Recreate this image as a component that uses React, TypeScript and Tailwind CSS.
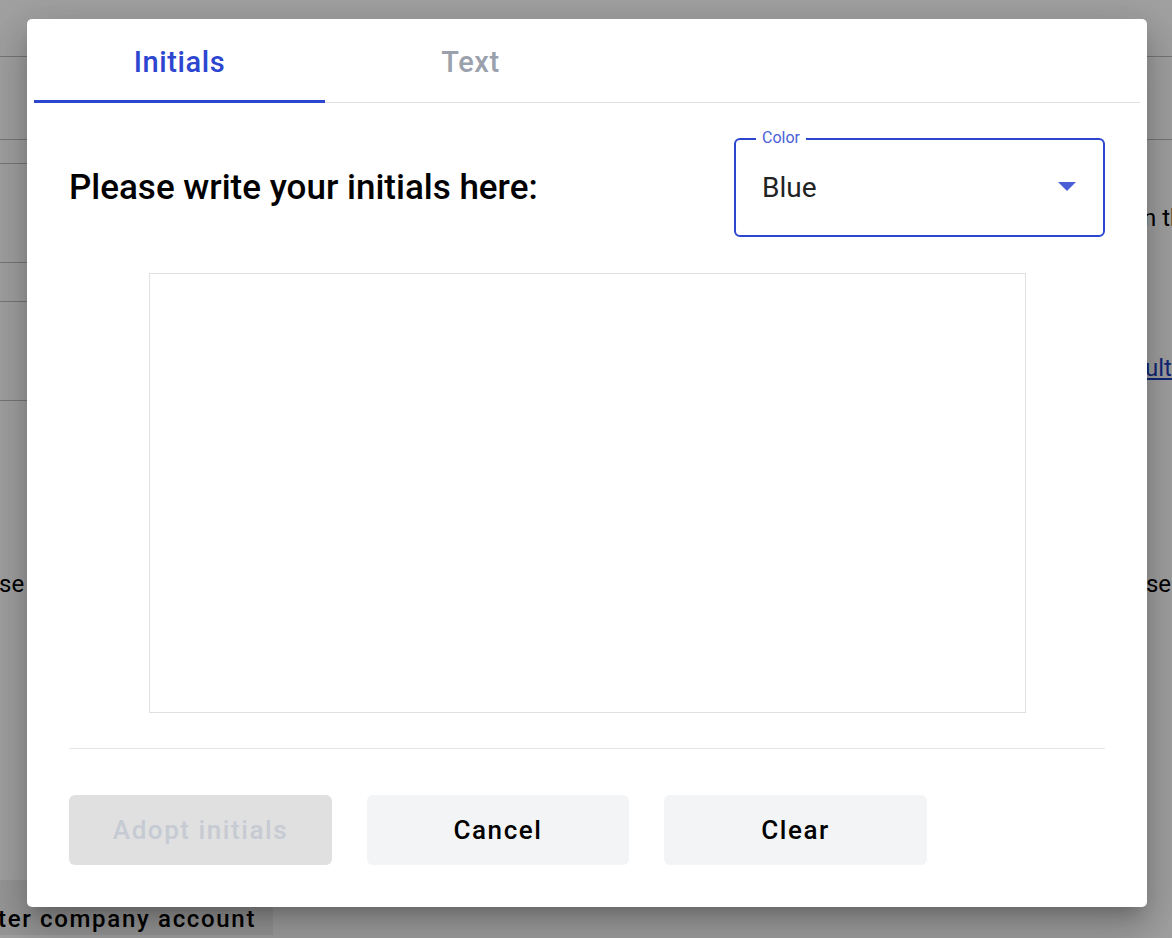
export default function App() {
  return (
    <div className="relative h-[938px] w-[1172px] overflow-hidden bg-white font-['Roboto',sans-serif] text-black">
      {/* page behind the dialog */}
      <div className="flex flex-col">
        <div className="h-[57px] border-b border-[#bdbdbd]" />
        <div className="h-[83px] border-b border-[#bdbdbd]" />
        <div className="flex">
          <div className="flex w-[400px] shrink-0 flex-col">
            <div className="h-[24px] border-b border-[#bdbdbd]" />
            <div className="h-[99px] border-b border-[#bdbdbd]" />
            <div className="h-[39px] border-b border-[#bdbdbd]" />
            <div className="h-[99px] border-b border-[#bdbdbd]" />
          </div>
          <div className="flex flex-col text-[24px] leading-[28px] whitespace-nowrap">
            <div className="mt-[64px] pl-[743px]">n the</div>
            <div className="mt-[122px] pl-[745px] text-[#1f3fbf] underline">ult</div>
          </div>
        </div>
        <div className="mt-[169px] flex justify-between text-[24px] leading-[28px] whitespace-nowrap">
          <span className="-ml-[1px]">se</span>
          <span className="pr-[1px]">se</span>
        </div>
        <div className="mt-[282px] flex h-[55px] w-[273px] items-center bg-[#f0f0f0] text-[24px] font-medium tracking-[0.07em] whitespace-nowrap">
          <span className="-ml-[2px] pt-[22px]">ter company account</span>
        </div>
      </div>

      {/* modal overlay */}
      <div className="absolute inset-0 flex items-start bg-black/[0.37] pl-[27px] pt-[19px]">
        <div className="flex w-[1120px] flex-col rounded-[5px] bg-white px-[42px] pb-[42px] shadow-[0px_11px_15px_-7px_rgba(0,0,0,0.2),0px_24px_38px_3px_rgba(0,0,0,0.14),0px_9px_46px_8px_rgba(0,0,0,0.12)]">
          <div className="-mx-[35px] flex h-[84px] border-b border-[#e0e0e0]">
            <button className="-mb-px flex h-[84px] w-[291px] items-center justify-center border-b-[3px] border-[#2c46d0] pt-[6px] text-[29px] font-medium tracking-[0.02em] text-[#2c46d0]">
              Initials
            </button>
            <button className="-mb-px flex h-[84px] w-[291px] items-center justify-center border-b-[3px] border-transparent pt-[6px] text-[29px] font-medium tracking-[0.02em] text-[#9aa1ac]">
              Text
            </button>
          </div>

          <div className="mt-[35px] flex items-center justify-between">
            <h2 className="text-[35px] font-medium leading-none">Please write your initials here:</h2>
            <div className="relative flex h-[99px] w-[371px] items-center justify-between rounded-[6px] border-2 border-[#2c46d0] pl-[26px] pr-[27px]">
              <span className="absolute -top-[12px] left-[20px] bg-white px-[6px] text-[16px] leading-[20px] text-[#4a5fd6]">Color</span>
              <span className="text-[28px] leading-none text-[#222]">Blue</span>
              <svg width="18" height="9" viewBox="0 0 18 9" className="mb-[2px]">
                <path d="M0 0 L18 0 L9 9 Z" fill="#4a5fd6" />
              </svg>
            </div>
          </div>

          <div className="mx-auto mt-[36px] h-[440px] w-[877px] border border-[#e0e0e0]" />

          <div className="mt-[35px] h-px bg-[#e5e5e5]" />

          <div className="mt-[46px] flex gap-[35px]">
            <button className="h-[70px] w-[263px] rounded-[6px] bg-[#e0e0e0] text-[26px] font-medium tracking-[0.06em] text-[#c6cbd3]">
              Adopt initials
            </button>
            <button className="h-[70px] w-[262px] rounded-[6px] bg-[#f3f4f6] text-[26px] font-medium tracking-[0.06em] text-black">
              Cancel
            </button>
            <button className="h-[70px] w-[263px] rounded-[6px] bg-[#f3f4f6] text-[26px] font-medium tracking-[0.06em] text-black">
              Clear
            </button>
          </div>
        </div>
      </div>
    </div>
  )
}
